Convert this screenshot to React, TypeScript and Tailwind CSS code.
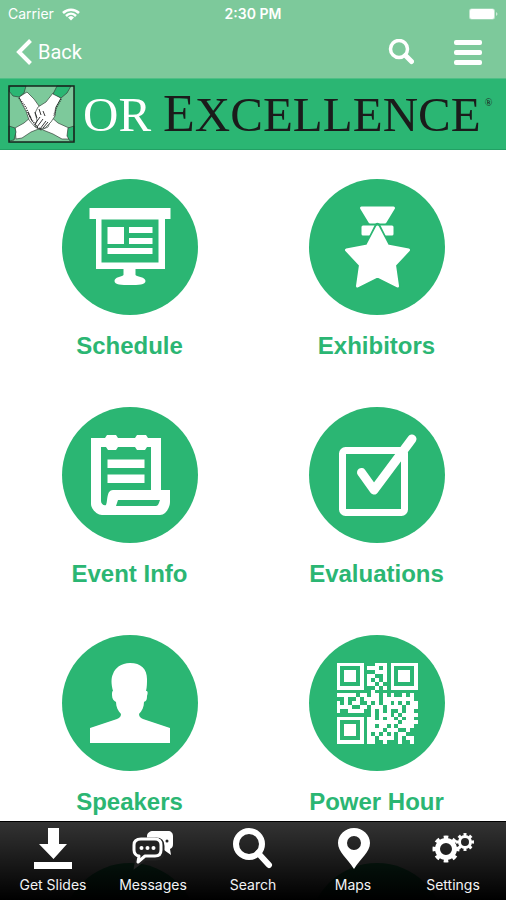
import type { ReactNode } from 'react'

type Tile = { label: string; icon: ReactNode }
type Tab = { label: string; icon: ReactNode }

const qrRows = [
  '#######...###.#######',
  '#.....#.###.#.#.....#',
  '#.###.#...###.#.###.#',
  '#.###.#.##..#.#.###.#',
  '#.###.#.#.#.#.#.###.#',
  '#.....#.##.#..#.....#',
  '#######...#.#.#######',
  '.........#...........',
  '#####.##.##.#.#..#.#.',
  '..#..#.####.########.',
  '#.#.##..#.#.##.#.#.##',
  '####..##.###.####.###',
  '#..####..#.#.#..#.##.',
  '.........#.###.#.####',
  '#######.##.#.##.#.##.',
  '#.....#.########.####',
  '#.###.#.##.##.#.####.',
  '#.###.#.####.###..#..',
  '#.###.#.#.#.#.#.##...',
  '#.....#.##.####.#.##.',
  '#######.##..#...#..#.',
]

const qrPath = qrRows
  .map((row, y) => [...row].map((c, x) => (c === '#' ? `M${x} ${y}h1v1h-1z` : '')).join(''))
  .join('')

const tiles: Tile[] = [
  {
    label: 'Schedule',
    icon: (
      <g fill="#fff">
        <path d="M27.5 29h81v11h-5.5v50H34V40h-6.5z M39.5 40.5v43h57v-43z" fillRule="evenodd" />
        <path d="M45.5 48h16.5v17H45.5z M67 48h23.5v6H67z M67 59h23.5v6H67z M45.5 69h45v6h-45z" />
        <path d="M61.5 89h12v7c2 2 10 2 10 6s-7 4-15.5 4-15.5 0-15.5-4 7-4 9-6z" />
      </g>
    ),
  },
  {
    label: 'Exhibitors',
    icon: (
      <g fill="#fff" stroke="#fff" strokeWidth="3" strokeLinejoin="round">
        <path d="M52.5 29h32L76 43H61z" />
        <path d="M54 48h29v7H54z" />
        <path
          d="M68.5 47l10 20 21 4-14 15 3 21-20-10-20 10 3-21-14-15 21-4z"
          stroke="#2bb673"
          strokeWidth="6"
        />
        <path d="M68.5 48l10 19 21 4-14 15 3 21-20-10-20 10 3-21-14-15 21-4z" />
      </g>
    ),
  },
  {
    label: 'Event Info',
    icon: (
      <g fill="#fff">
        <path
          d="M29 31h14l2-3h9l2 3h17l2-3h9l2 3h13v52h9v12c0 5-4 13-10 13H40c-5 0-11-6-11-11z M39 40v54c0 3 3 5 5 4 2-3 0-15 7-15h38V40h-4l-2 3h-8l-2-3H56l-2 3h-8l-2-3z M56 93l-2 6h40c2 0 3-3 4-6z"
          fillRule="evenodd"
        />
        <path d="M45.5 52.5h37V61h-37z M45.5 67.5h37V76h-37z" />
      </g>
    ),
  },
  {
    label: 'Evaluations',
    icon: (
      <g fill="none" stroke="#fff" strokeLinejoin="round" strokeLinecap="round">
        <rect x="33.5" y="43.5" width="62" height="62" rx="3" strokeWidth="7" />
        <path d="M52.5 65.5L65 83l38-51" strokeWidth="9" />
      </g>
    ),
  },
  {
    label: 'Speakers',
    icon: (
      <path
        fill="#fff"
        d="M28 108V93l27-9c2-1 4-2 4-5-3-3-5-7-5-12-2-1-4-3-4-7 0-2 0-4 1-4-2-7-2-13 0-17 2-6 8-11 17-11 11 0 17 6 17 16 0 4 0 8-1 12 2 0 2 2 1 5 0 4-1 5-3 6 0 5-2 9-5 12 0 3 2 4 4 5l27 9v15z"
      />
    ),
  },
  {
    label: 'Power Hour',
    icon: <path fill="#fff" transform="translate(27.5 27.5) scale(3.86)" shapeRendering="crispEdges" d={qrPath} />,
  },
]

const tabs: Tab[] = [
  {
    label: 'Get Slides',
    icon: <path fill="#fff" d="M17 1h11v16h8L22.5 32 8 17h9z M3 35h38v7H3z" />,
  },
  {
    label: 'Messages',
    icon: (
      <>
        <path d="M22 4h15c3 0 5 2 5 5v8c0 3-1 4-3 5l1 6-7-5H22c-4 0-6-3-6-6V9c0-3 3-5 6-5z" fill="#fff" />
        <path d="M9 13h16c4 0 6 2 6 6v6c0 4-2 6-6 6H14l-8 6 1-6c-3-1-5-3-5-6v-6c0-4 2-6 7-6z" fill="#222" stroke="#222" strokeWidth="5" />
        <path d="M10 12h14c4 0 6 2 6 6v5c0 4-2 6-6 6H14l-7 6 1-6c-3 0-5-3-5-6v-5c0-4 2-6 7-6z" fill="#222" stroke="#fff" strokeWidth="3" strokeLinejoin="round" />
        <g fill="#fff">
          <circle cx="10.5" cy="21" r="2" />
          <circle cx="16.5" cy="21" r="2" />
          <circle cx="22.5" cy="21" r="2" />
        </g>
        <circle cx="36" cy="14" r="1.5" fill="#222" />
      </>
    ),
  },
  {
    label: 'Search',
    icon: (
      <g fill="none" stroke="#fff" strokeWidth="6">
        <circle cx="18" cy="17" r="13" />
        <path d="M27 26l11 12" strokeLinecap="round" />
      </g>
    ),
  },
  {
    label: 'Maps',
    icon: (
      <path
        fill="#fff"
        fillRule="evenodd"
        d="M23 1c9 0 16 7 16 15 0 9-9 15-16 26C16 31 7 25 7 16 7 8 14 1 23 1z M23 9a7 7 0 1 0 0 14 7 7 0 0 0 0-14z"
      />
    ),
  },
  {
    label: 'Settings',
    icon: (
      <g fill="none" stroke="#fff">
        <circle cx="15" cy="22" r="8.5" strokeWidth="5" />
        <circle cx="15" cy="22" r="11.5" strokeWidth="4" pathLength="16" strokeDasharray="1 1" strokeDashoffset="0.5" />
        <circle cx="34" cy="15" r="5.5" strokeWidth="3" />
        <circle cx="34" cy="15" r="7.5" strokeWidth="3" pathLength="16" strokeDasharray="1 1" strokeDashoffset="0.5" />
      </g>
    ),
  },
]

function StatusBar() {
  return (
    <div className="grid h-7 grid-cols-3 items-center px-2 font-[Inter,sans-serif] text-sm leading-none text-white">
      <div className="flex items-center gap-2">
        <span>Carrier</span>
        <svg width="18" height="13" viewBox="0 0 18 13" fill="none" stroke="#fff" strokeWidth="2.5" aria-label="Wi-Fi">
          <path d="M1 5c4.5-4.5 11.5-4.5 16 0M4 8c3-3 7-3 10 0" />
          <path d="M9 12.5L6 9.500c2-2 4-2 6 0z" fill="#fff" stroke="none" />
        </svg>
      </div>
      <div className="text-center font-semibold">2:30 PM</div>
      <svg className="justify-self-end" width="30" height="12" viewBox="0 0 30 12" aria-label="Battery">
        <rect x="1" y="0.5" width="26" height="11" rx="2.5" fill="#fff" opacity="0.5" />
        <rect x="2" y="1" width="24" height="10" rx="2" fill="#fff" />
        <path d="M28 4v4c2-1 2-3 0-4z" fill="#fff" opacity="0.6" />
      </svg>
    </div>
  )
}

function NavBar() {
  return (
    <nav className="flex h-12 items-center justify-between pr-6 pl-4 text-white">
      <button className="flex items-center gap-1.5 font-[Roboto,sans-serif] text-xl">
        <svg width="16" height="26" viewBox="0 0 16 26" fill="none" stroke="#fff" strokeWidth="4" aria-hidden="true">
          <path d="M14.5 1.5L3 13l11.5 11.5" />
        </svg>
        Back
      </button>
      <div className="flex items-center gap-10">
        <button aria-label="Search">
          <svg width="26" height="26" viewBox="0 0 26 26" fill="none" stroke="#fff" aria-hidden="true">
            <circle cx="11" cy="10" r="8.5" strokeWidth="3.5" />
            <path d="M17.5 16.5l6 6" strokeWidth="5" strokeLinecap="round" />
          </svg>
        </button>
        <button aria-label="Menu" className="flex w-7 flex-col gap-[5px]">
          <span className="h-[5px] rounded-xs bg-white" />
          <span className="h-[5px] rounded-xs bg-white" />
          <span className="h-[5px] rounded-xs bg-white" />
        </button>
      </div>
    </nav>
  )
}

function HandsLogo() {
  return (
    <svg width="67" height="58" viewBox="0 0 67 58" aria-hidden="true" className="shrink-0">
      <rect x="1" y="1" width="65" height="56" fill="#7dc99b" />
      <g stroke="#33423a" strokeWidth="0.7" strokeLinejoin="round">
        <path fill="#fff" d="M7 43l9-5 7-6 10-1 6 6-6 6-10 4-9 6-6 1z" />
        <path fill="#fff" d="M61 43l-11-5-8-7-8 0-5 9 6 5 10 4 9 5 7 0z" />
        <path fill="#fff" d="M11 12l8-5 7 7 5 7 6 4 6 10-3 7-7 3-6-3-6-7-3-9-4-7z" />
        <path fill="#fff" d="M45 8l8 5-5 9-1 9-4 6-6 6-6 1-4-3 2-6-2-7 3-6 8-5z" />
        <path fill="#2bb673" d="M2 1h16l-2 7-5 4-6-1-4-5z" />
        <path fill="#2bb673" d="M49 1h14l-4 7-6 5-8-4z" />
        <path fill="#2bb673" d="M1 41l6 2 1 4-2 8-5 1z" />
        <path fill="#2bb673" d="M66 41l-6 2-1 8 3 5h4z" />
      </g>
      <path
        fill="none"
        stroke="#222"
        strokeWidth="0.9"
        d="M27 39l5-7M29 42l6-8M32 44l6-8M35 43l5-6M27 27l2 6M31 24l2 6M35 26l2 5M20 27l2 5M22 31l2 5"
      />
      <path fill="none" stroke="#222" strokeWidth="1.5" strokeDasharray="1 1" d="M19 25l4 9 6 8 5 3M11 13l8 11M53 14l-5 9-2 8" />
      <rect x="1" y="1" width="65" height="56" fill="none" stroke="#16251c" strokeWidth="1.5" />
    </svg>
  )
}

function Banner() {
  return (
    <div className="flex h-[72px] items-center border-t border-b border-t-[#4fbf86] border-b-[#22a064] bg-[#2bb673] pl-2">
      <HandsLogo />
      <h1 className="ml-2 flex items-baseline font-['Liberation_Serif',serif] text-[49px] leading-none whitespace-nowrap text-[#1b1b1b]">
        <span className="mr-3 text-white">OR</span>
        <span className="text-[52px] leading-none">E</span>
        <span>XCELLENCE</span>
        <sup className="ml-1 self-start text-[10px] leading-10">®</sup>
      </h1>
    </div>
  )
}

function TileLink({ tile }: { tile: Tile }) {
  return (
    <a href="#" className="flex h-[228px] flex-col items-center">
      <svg width="136" height="136" viewBox="0 0 136 136" aria-hidden="true">
        <circle cx="68" cy="68" r="68" fill="#2bb673" />
        {tile.icon}
      </svg>
      <span className="mt-[15px] font-['Liberation_Sans',sans-serif] text-2xl font-bold text-[#2bb673]">{tile.label}</span>
    </a>
  )
}

function TabBar() {
  return (
    <div className="absolute inset-x-0 bottom-0 grid grid-cols-5 border-t border-black bg-linear-to-b from-black/80 to-black px-[3px] pt-[5px] pb-[3px]">
      {tabs.map(tab => (
        <button key={tab.label} className="flex flex-col items-center gap-0.5 font-[Inter,sans-serif] text-sm leading-6 text-gray-100">
          <svg width="44" height="44" viewBox="0 0 44 44" aria-hidden="true">
            {tab.icon}
          </svg>
          {tab.label}
        </button>
      ))}
    </div>
  )
}

export default function App() {
  return (
    <div className="relative flex h-dvh flex-col overflow-hidden bg-white">
      <header className="bg-[#7dc99b]">
        <StatusBar />
        <NavBar />
        <div className="h-0.5" />
        <Banner />
      </header>
      <main className="flex-1 overflow-y-auto [scrollbar-width:none]">
        <div className="grid grid-cols-2 px-1.5 pt-[29px]">
          {tiles.map(tile => (
            <TileLink key={tile.label} tile={tile} />
          ))}
          {/* last row sits under the tab bar */}
          <div className="size-[136px] justify-self-center rounded-full bg-[#2bb673]" />
          <div className="size-[136px] justify-self-center rounded-full bg-[#2bb673]" />
        </div>
      </main>
      <TabBar />
    </div>
  )
}
